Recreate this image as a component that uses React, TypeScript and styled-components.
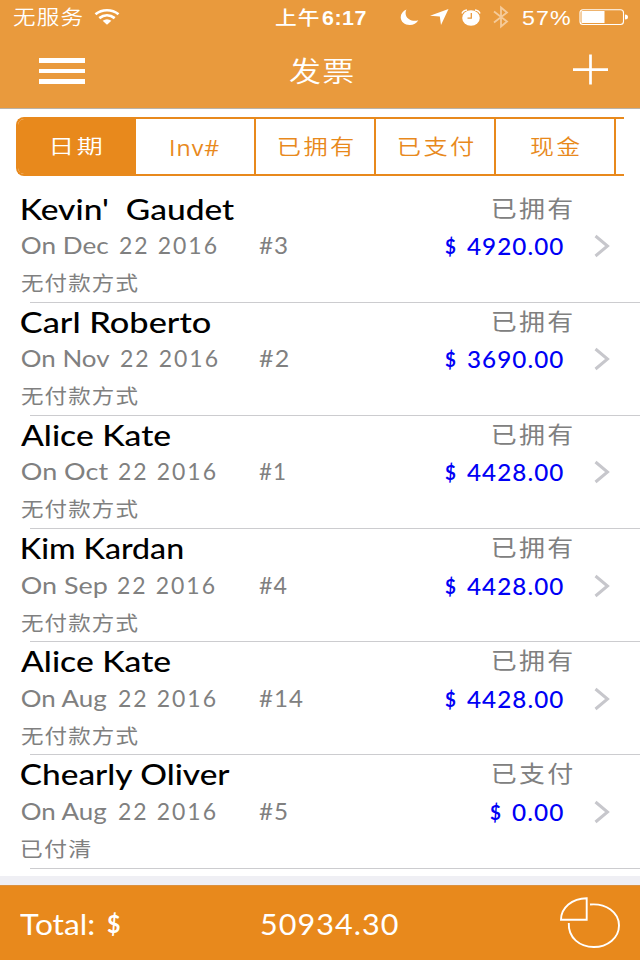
import React, { useLayoutEffect, useState } from "react";
import styled, { createGlobalStyle } from "styled-components";

const Global = createGlobalStyle`
  * { box-sizing: border-box; }
  body { margin: 0; background: #efeff4; }
`;

const latin = `Lato, "Noto Sans CJK SC", sans-serif`;
const cjk = `"Noto Sans CJK SC", sans-serif`;
const system = `"Liberation Sans", "Noto Sans CJK SC", sans-serif`;
const thin = `Roboto, "Noto Sans CJK SC", sans-serif`;

const Slot = styled.span<{ $w: number; $ml?: number; $dy?: number }>`
  display: block;
  flex: none;
  width: ${(p) => p.$w}px;
  margin-left: ${(p) => p.$ml ?? 0}px;
  margin-top: ${(p) => p.$dy ?? 0}px;
`;

const Glyphs = styled.span<{ $size: number; $color: string; $weight: number; $font: string; $ls: number }>`
  display: block;
  width: max-content;
  white-space: pre;
  transform-origin: 0 50%;
  line-height: 30px;
  font-family: ${(p) => p.$font};
  font-size: ${(p) => p.$size}px;
  font-weight: ${(p) => p.$weight};
  letter-spacing: ${(p) => p.$ls}px;
  color: ${(p) => p.$color};
`;

type LabelProps = {
  children: string;
  w: number;
  size: number;
  color?: string;
  weight?: number;
  font?: string;
  ls?: number;
  ml?: number;
  dy?: number;
};

/* A label in wide lettering: its ink is stretched to the width w. */
function Label({ children, w, size, color = "#fff", weight = 400, font = latin, ls = 0, ml, dy }: LabelProps) {
  const [transform, setTransform] = useState("none");
  useLayoutEffect(() => {
    const ctx = document.createElement("canvas").getContext("2d") as any;
    if (!ctx) return;
    ctx.font = `${weight} ${size}px ${font}`;
    ctx.letterSpacing = `${ls}px`;
    const m = ctx.measureText(children);
    const scale = w / (m.actualBoundingBoxLeft + m.actualBoundingBoxRight);
    setTransform(`translateX(${m.actualBoundingBoxLeft * scale}px) scaleX(${scale})`);
  }, [children, w, size, weight, font, ls]);
  return (
    <Slot $w={w} $ml={ml} $dy={dy}>
      <Glyphs $size={size} $color={color} $weight={weight} $font={font} $ls={ls} style={{ transform }}>
        {children}
      </Glyphs>
    </Slot>
  );
}

const Screen = styled.div`
  width: 640px;
  height: 960px;
  display: flex;
  flex-direction: column;
  overflow: hidden;
  background: #efeff4;
`;

const Header = styled.header`
  flex: none;
  height: 109px;
  background: #e99a3d;
  border-bottom: 1px solid #b9b2a8;
`;

const StatusBar = styled.div`
  display: flex;
  align-items: center;
  height: 34px;
  padding-left: 13px;
`;

const Icon = styled.svg<{ $ml?: number }>`
  display: block;
  flex: none;
  margin-left: ${(p) => p.$ml ?? 0}px;
`;

const NavBar = styled.div`
  display: flex;
  align-items: center;
  height: 74px;
  padding-left: 39px;
`;

const MenuButton = styled.button`
  display: flex;
  flex-direction: column;
  gap: 6.4px;
  width: 46px;
  padding: 0;
  border: 0;
  background: none;
`;

const MenuBar = styled.span`
  height: 4.2px;
  width: 45.5px;
  background: #fff;
`;

const Content = styled.main`
  flex: none;
  height: 767px;
  background: #fff;
`;

const TabsWrap = styled.div`
  height: 80.5px;
  padding-top: 8px;
`;

const Tabs = styled.nav`
  display: flex;
  height: 59px;
  width: 608px;
  margin: 0 0 0 16px;
  overflow: hidden;
  border: 2px solid #e8891c;
  border-right: 0;
  border-radius: 8px 0 0 8px;
`;

const Tab = styled.div<{ $active?: boolean; $first?: boolean }>`
  flex: none;
  display: flex;
  align-items: center;
  justify-content: center;
  width: ${(p) => (p.$first ? 118 : 120)}px;
  border-right: 2px solid #e8891c;
  background: ${(p) => (p.$active ? "#e8891c" : "#fff")};
`;

const Row = styled.article`
  display: flex;
  flex-direction: column;
  height: 113.2px;
  padding-left: 21px;
  position: relative;
  &::after {
    content: "";
    position: absolute;
    left: 30px;
    right: 0;
    bottom: 0;
    height: 1px;
    background: #cccccf;
  }
`;

const Line = styled.div<{ $h: number }>`
  flex: none;
  display: flex;
  align-items: center;
  height: ${(p) => p.$h}px;
`;

const Cell = styled.div<{ $w: number; $end?: boolean }>`
  flex: none;
  display: flex;
  justify-content: ${(p) => (p.$end ? "flex-end" : "flex-start")};
  width: ${(p) => p.$w}px;
`;

const Footer = styled.footer`
  flex: none;
  display: flex;
  align-items: center;
  margin-top: 9px;
  height: 75px;
  padding-left: 20px;
  background: #e8891c;
  border-top: 1px solid #dc913f;
`;

const tabs = [
  { text: "日期", w: 49, font: cjk, size: 20.5, weight: 350, active: true },
  { text: "Inv#", w: 48, font: `"Open Sans", sans-serif`, size: 22, weight: 400 },
  { text: "已拥有", w: 75, font: cjk, size: 21, weight: 350 },
  { text: "已支付", w: 75, font: cjk, size: 21, weight: 350 },
  { text: "现金", w: 50, font: cjk, size: 21, weight: 350 },
];

const rows = [
  { name: "Kevin'  Gaudet", nw: 213, month: "On Dec", mw: 87, num: "#3", hw: 28, amount: "4920.00", method: "无付款方式", status: "已拥有" },
  { name: "Carl Roberto", nw: 190, month: "On Nov", mw: 88, num: "#2", hw: 29, amount: "3690.00", method: "无付款方式", status: "已拥有" },
  { name: "Alice Kate", nw: 150, month: "On Oct", mw: 86, num: "#1", hw: 26, amount: "4428.00", method: "无付款方式", status: "已拥有" },
  { name: "Kim Kardan", nw: 161, month: "On Sep", mw: 85, num: "#4", hw: 28, amount: "4428.00", method: "无付款方式", status: "已拥有" },
  { name: "Alice Kate", nw: 150, month: "On Aug", mw: 86, num: "#14", hw: 44, amount: "4428.00", method: "无付款方式", status: "已拥有" },
  { name: "Chearly Oliver", nw: 210, month: "On Aug", mw: 86, num: "#5", hw: 28, amount: "0.00", method: "已付清", status: "已支付" },
];

export default function App() {
  return (
    <>
      <Global />
      <Screen>
        <Header>
          <StatusBar>
            <Label w={70} size={20} weight={350} font={cjk} ls={1}>无服务</Label>
            <Icon $ml={11} width="26" height="18" viewBox="0 0 26 18">
              <g fill="none" stroke="#fff" strokeWidth="2.7">
                <path d="M1.5 6.3C8 .9 18 .9 24.5 6.3" />
                <path d="M5.3 10.1C10 6.4 16 6.4 20.7 10.1" />
              </g>
              <path d="M8.6 12.8Q13 9.6 17.4 12.8L13 16.8Z" fill="#fff" />
            </Icon>
            <Label ml={155} w={44} size={19.5} weight={500} font={cjk} ls={1}>上午</Label>
            <Label ml={3} w={44} size={20.5} weight={700} font={system} ls={0.5} dy={2}>6:17</Label>
            <Icon $ml={34} width="19" height="17" viewBox="0 0 19 17">
              <path d="M6.5.5C3 2 .7 4.8.7 8.3c0 4.5 4 7.7 9 7.7 3.8 0 7-1.7 8.6-4.7C12.500 13 7.500 10.500 6 6.500 5.300 4.500 5.500 2 6.500.5Z" fill="#fff" />
            </Icon>
            <Icon $ml={11} width="19" height="16" viewBox="0 0 19 16">
              <path d="M18.500 0 11 16 9.800 7.500 0 6.800Z" fill="#fff" />
            </Icon>
            <Icon $ml={12} width="20" height="17" viewBox="0 0 20 17">
              <ellipse cx="10" cy="9" rx="8.800" ry="7.700" fill="#fff" />
              <path d="M1 4.500Q2 1.500 6 1M19 4.500Q18 1.500 14 1" fill="none" stroke="#fff" strokeWidth="1.400" />
              <path d="M10.300 4v5.200H6.500" fill="none" stroke="#e99a3d" strokeWidth="1.300" />
            </Icon>
            <Icon $ml={12} width="17" height="24" viewBox="0 0 17 24">
              <path d="M1 6.500 14 16.500 8 21.500V2.500L14 7.500 1 17.500" fill="none" stroke="#f5cb9a" strokeWidth="1.800" />
            </Icon>
            <Label ml={12} w={49} size={20} weight={400} font={system} ls={1} dy={2}>57%</Label>
            <Icon $ml={8} width="50" height="18" viewBox="0 0 50 18">
              <rect x="1" y="1.700" width="43.500" height="14.800" rx="3" fill="none" stroke="#fff" strokeWidth="1.100" />
              <rect x="2.500" y="3" width="23" height="12" fill="#fff" />
              <path d="M46 6.500Q49 6.500 49 9T46 11.500Z" fill="#fff" />
            </Icon>
          </StatusBar>
          <NavBar>
            <MenuButton>
              <MenuBar />
              <MenuBar />
              <MenuBar />
            </MenuButton>
            <Label ml={204} w={64} size={28} weight={350} font={cjk} ls={1} dy={-2}>发票</Label>
            <Icon $ml={220} width="36" height="35" viewBox="0 0 36 35">
              <path d="M0 15.700H35M17.500.500V30.500" fill="none" stroke="#fff" strokeWidth="2.700" />
            </Icon>
          </NavBar>
        </Header>
        <Content>
          <TabsWrap>
            <Tabs>
              {tabs.map((t, i) => (
                <Tab key={t.text} $active={t.active} $first={i === 0}>
                  <Label w={t.w} size={t.size} weight={t.weight} font={t.font} ls={i === 1 ? 1 : 2} dy={i === 1 ? 0 : -3} color={t.active ? "#fff" : "#e8891c"}>
                    {t.text}
                  </Label>
                </Tab>
              ))}
            </Tabs>
          </TabsWrap>
          {rows.map((r, i) => (
            <Row key={i}>
              <Line $h={38}>
                <Cell $w={472}>
                  <Label ml={r.name[0] === "K" ? 1 : 0} w={r.nw} size={28.5} weight={500} color="#000">{r.name}</Label>
                </Cell>
                <Label w={79.5} size={22.5} font={cjk} color="#808080" ls={2} dy={-4}>{r.status}</Label>
              </Line>
              <Line $h={37}>
                <Cell $w={238}>
                  <Label ml={0.5} w={r.mw} size={22.5} color="#808080">{r.month}</Label>
                  <Label w={97} ml={11} size={22.5} ls={2} color="#808080">22 2016</Label>
                </Cell>
                <Cell $w={121}>
                  <Label w={r.hw} size={22.5} ls={1} color="#808080">{r.num}</Label>
                </Cell>
                <Cell $w={183} $end>
                  <Label w={11} size={20.5} weight={700} color="#0000f5">$</Label>
                  <Label w={r.amount.length > 4 ? 96 : 51} ml={11} size={23} weight={500} ls={1} color="#0000f5">{r.amount}</Label>
                </Cell>
                <Icon $ml={31} width="16" height="24" viewBox="0 0 16 24">
                  <path d="M1.500 2 13.500 12 1.500 22" fill="none" stroke="#c7c7cc" strokeWidth="3" />
                </Icon>
              </Line>
              <Line $h={38}>
                <Label w={r.method.length > 3 ? 117 : 69} size={20} font={cjk} color="#808080" ls={1} dy={-1}>{r.method}</Label>
              </Line>
            </Row>
          ))}
        </Content>
        <Footer>
          <Label w={74} size={28.5} dy={1}>Total:</Label>
          <Label ml={13} w={13} size={25} weight={700}>$</Label>
          <Label ml={141} w={137} size={28.5} ls={1} dy={1}>50934.30</Label>
          <Icon $ml={162} width="61" height="52" viewBox="0 0 61 52">
            <g fill="none" stroke="#fff" strokeWidth="1.900">
              <path d="M26.700 1.200V22.700H1C1 11 12 1.200 26.700 1.200Z" />
              <path d="M30 7.500C46 6 59 15.500 59 28.500 59 41 47.500 50 33.800 50 20 50 8 41 8.800 26" />
            </g>
          </Icon>
        </Footer>
      </Screen>
    </>
  );
}
